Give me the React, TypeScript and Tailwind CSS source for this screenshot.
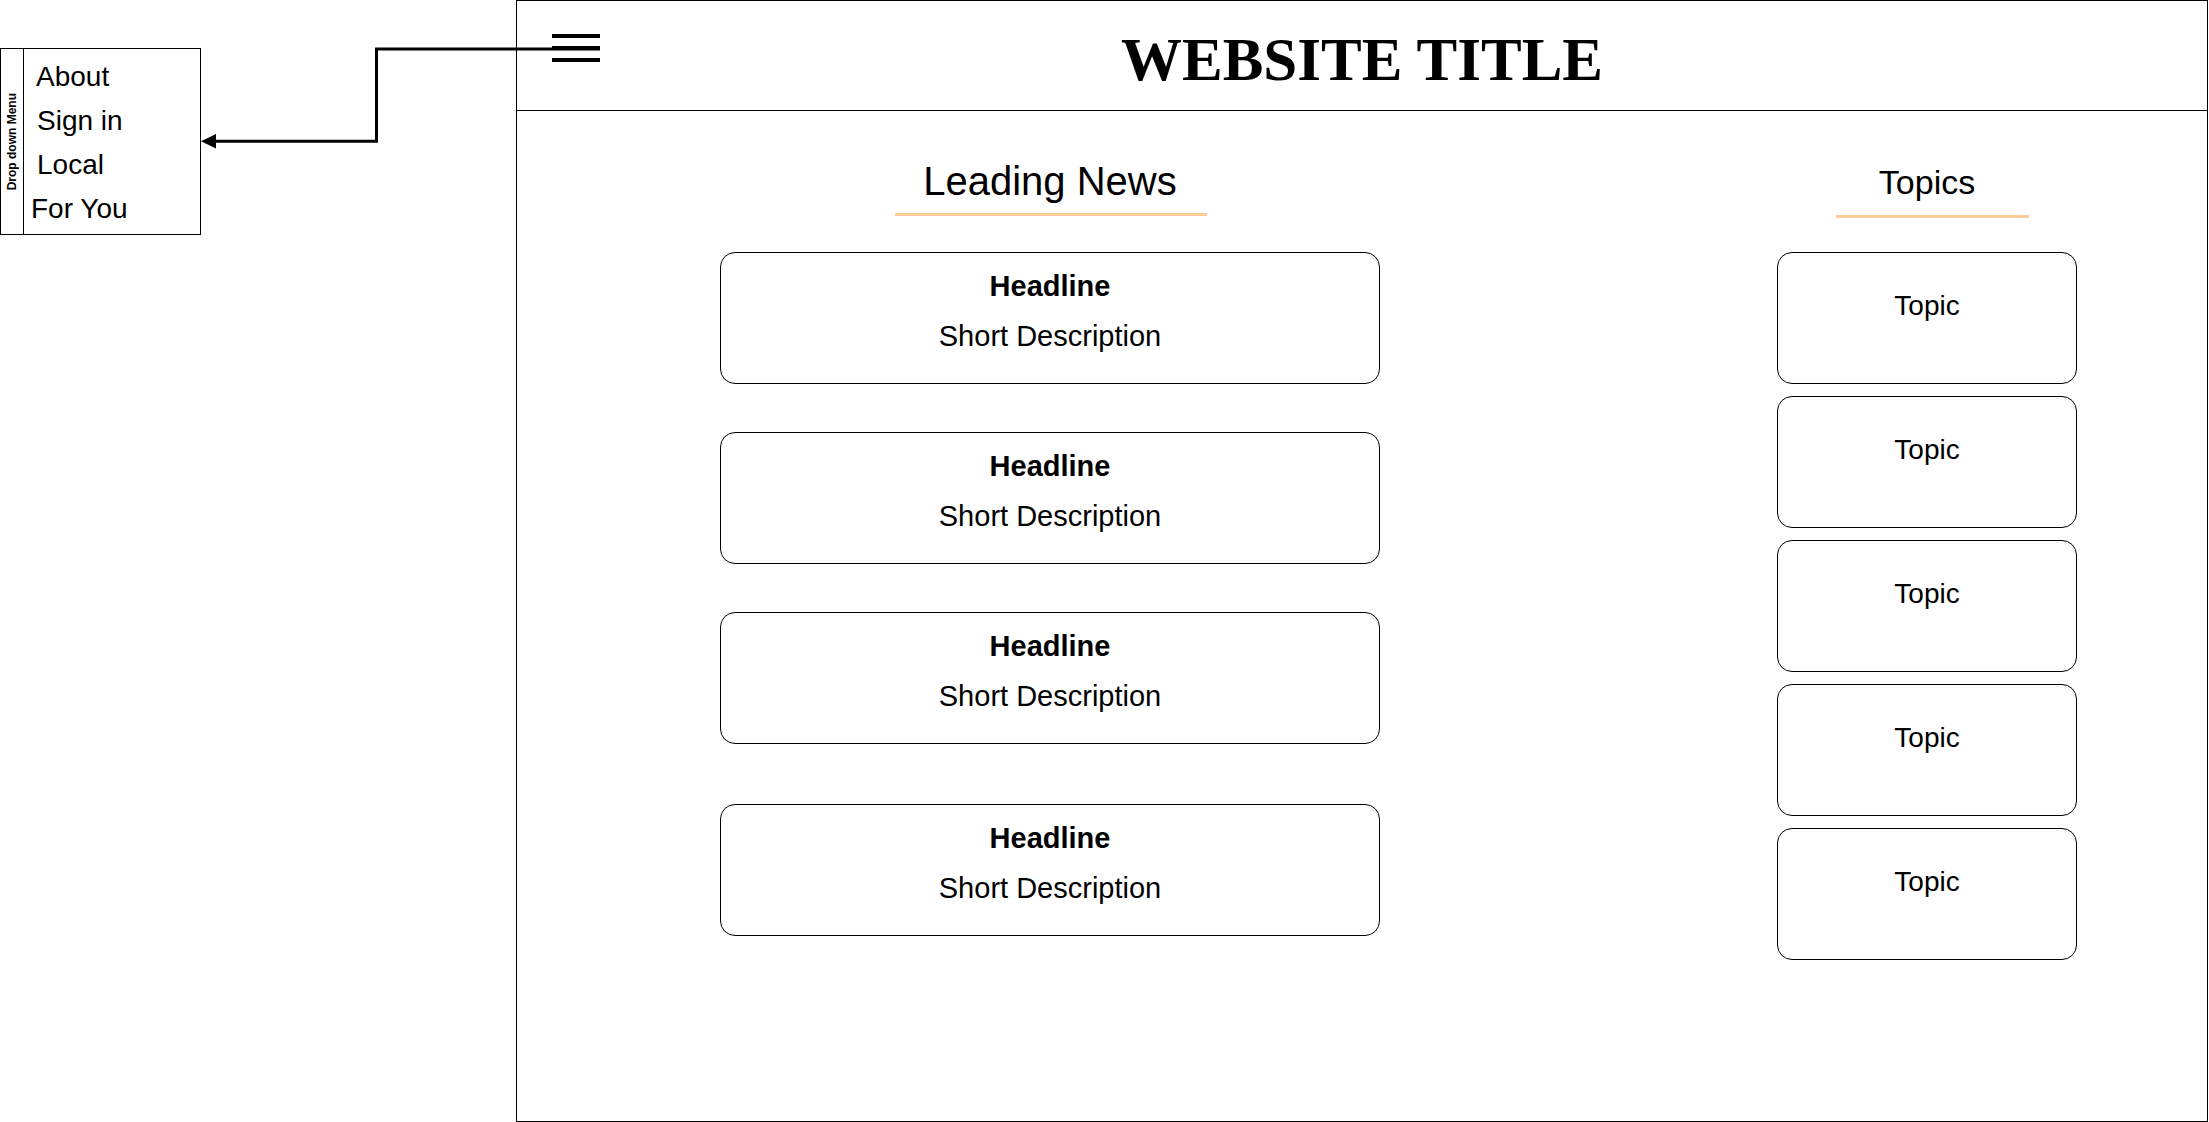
import React from "react";

const news = [0, 1, 2, 3];
const newsGaps = ["mt-[36px]", "mt-[48px]", "mt-[48px]", "mt-[60px]"];

function NewsCard({ mt }: { mt: string }) {
  return (
    <div
      className={`${mt} h-[132px] w-[660px] rounded-[15px] border border-black pt-[8px] text-center text-[29px] leading-[50px]`}
    >
      <div className="font-bold">Headline</div>
      <div>Short Description</div>
    </div>
  );
}

function TopicCard() {
  return (
    <div className="h-[132px] w-[300px] rounded-[15px] border border-black pt-[39px] text-center text-[28px] leading-none">
      Topic
    </div>
  );
}

export default function App() {
  return (
    <div className="relative flex h-[1122px] w-[2209px] overflow-hidden bg-white font-['Liberation_Sans',Arial,sans-serif] text-black">
      {/* Left: dropdown menu */}
      <div className="w-[516px] shrink-0 pt-[48px]">
        <div className="flex h-[187px] w-[201px] border border-black">
          <div className="flex w-[23px] shrink-0 items-center justify-center border-r border-black">
            <span className="rotate-180 whitespace-nowrap text-[12px] font-bold leading-none [writing-mode:vertical-rl]">
              Drop down Menu
            </span>
          </div>
          <div className="flex flex-col pt-[6px] text-[28px] leading-[44px]">
            <div className="ml-[12px]">About</div>
            <div className="ml-[13px]">Sign in</div>
            <div className="ml-[13px]">Local</div>
            <div className="ml-[7px]">For You</div>
          </div>
        </div>
      </div>

      {/* Main frame */}
      <div className="flex h-[1122px] w-[1692px] shrink-0 flex-col border border-black">
        <header className="grid h-[110px] shrink-0 grid-cols-[1fr_auto_1fr] border-b border-black">
          <div>
            <div className="ml-[35px] mt-[33px] flex w-[48px] flex-col gap-[8px]">
              <div className="h-[4px] bg-black" />
              <div className="h-[4px] bg-black" />
              <div className="h-[4px] bg-black" />
            </div>
          </div>
          <div className="pt-[28px] font-['Liberation_Serif','Times_New_Roman',serif] text-[61px] font-bold leading-none whitespace-nowrap">
            WEBSITE TITLE
          </div>
          <div />
        </header>

        <div className="flex pl-[203px]">
          {/* Leading news column */}
          <div className="flex w-[660px] shrink-0 flex-col pt-[50px]">
            <div className="text-center text-[40px] leading-none">Leading News</div>
            <div className="ml-[175px] mt-[12px] h-[3px] w-[312px] bg-[#ffcc99]" />
            {news.map((i) => (
              <NewsCard key={i} mt={newsGaps[i]} />
            ))}
          </div>

          {/* Topics column */}
          <div className="ml-[397px] flex w-[300px] shrink-0 flex-col pt-[54px]">
            <div className="text-center text-[34px] leading-none">Topics</div>
            <div className="ml-[59px] mt-[16px] h-[3px] w-[193px] bg-[#ffcc99]" />
            <div className="mt-[34px] flex flex-col gap-[12px]">
              <TopicCard />
              <TopicCard />
              <TopicCard />
              <TopicCard />
              <TopicCard />
            </div>
          </div>
        </div>
      </div>

      {/* Connector arrow from hamburger to dropdown */}
      <svg
        className="pointer-events-none absolute left-0 top-0"
        width="620"
        height="170"
        viewBox="0 0 620 170"
      >
        <path
          d="M 600 49 H 376.5 V 141.3 H 214"
          fill="none"
          stroke="#000"
          strokeWidth="3"
        />
        <polygon points="201,141.3 216,134 216,148.6" fill="#000" />
      </svg>
    </div>
  );
}
